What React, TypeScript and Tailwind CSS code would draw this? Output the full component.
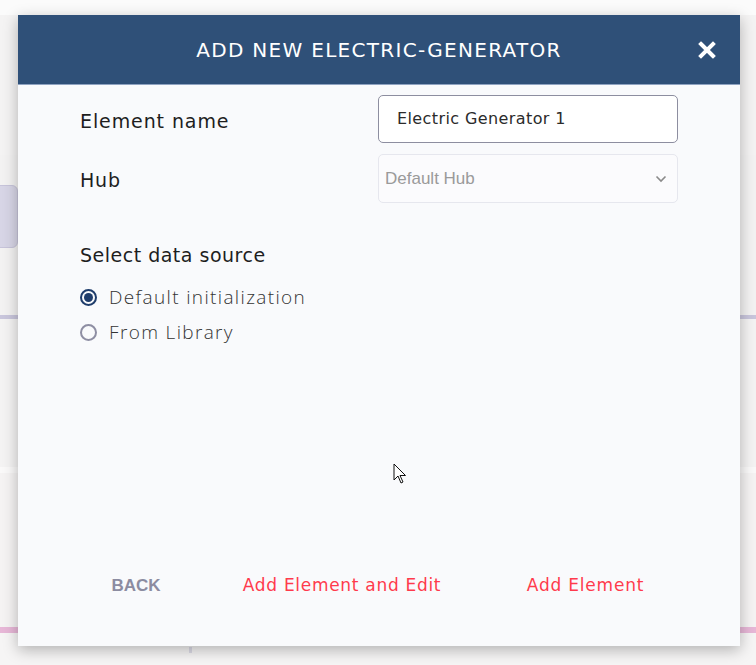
import React from 'react';

const labelFont = { fontFamily: '"DejaVu Sans", "Open Sans", sans-serif' };
const arial = { fontFamily: '"Liberation Sans", Arial, sans-serif' };
const lightFont = { fontFamily: '"Open Sans", "DejaVu Sans", sans-serif' };

const Radio: React.FC<{ checked?: boolean; label: string }> = ({ checked, label }) => (
  <label className="flex items-center h-[35px] gap-[12px]">
    <span
      className={
        checked
          ? 'flex items-center justify-center w-[17px] h-[17px] rounded-full border-2 border-[#1f3d6b]'
          : 'flex items-center justify-center w-[17px] h-[17px] rounded-full border-2 border-[#8e8ea3]'
      }
    >
      {checked && <span className="w-[9px] h-[9px] rounded-full bg-[#1f3d6b]" />}
    </span>
    <span className="text-[19px] font-light tracking-[1.35px] text-[#333333]" style={lightFont}>
      {label}
    </span>
  </label>
);

const App: React.FC = () => {
  return (
    <div className="relative w-[756px] h-[665px] overflow-hidden bg-[#f3f2f2]" style={labelFont}>
      {/* page behind the modal */}
      <div className="flex flex-col h-full">
        <div className="h-[15px] bg-[#fbfbfb]" />
        <div className="h-[140px] bg-[#f4f3f3]" />
        <div className="flex items-start h-[160px] pt-[30px]">
          <div className="w-[24px] h-[63px] ml-[-6px] rounded-[6px] bg-[#d7d5e6] border border-[#c7c4da]" />
        </div>
        <div className="h-[4px] bg-[#c9c6dc]" />
        <div className="h-[148px] bg-[#f4f3f3]" />
        <div className="h-[6px] bg-[#faf9f9]" />
        <div className="h-[154px] bg-[#f5f3f3]" />
        <div className="h-[6px] bg-[#e7b7d7]" />
        <div className="flex-1 bg-[#f6f5f5] pl-[189px] pt-[4px]">
          <div className="w-[3px] h-[6px] bg-[#dcdbe6] mb-[4px]" />
          <div className="w-[3px] h-[6px] bg-[#dcdbe6]" />
        </div>
      </div>

      {/* modal */}
      <div className="absolute left-[18px] top-[15px] w-[722px] h-[631px] flex flex-col bg-[#f9fafc] shadow-[0_4px_14px_rgba(0,0,0,0.28)]">
        <div className="relative h-[70px] flex items-center justify-center bg-[#2f5078] border-b border-[#8fa3c1]">
          <span className="text-white text-[20px] tracking-[1.3px]">ADD NEW ELECTRIC-GENERATOR</span>
          <svg className="absolute right-[24px] top-[26px]" width="18" height="18" viewBox="0 0 18 18">
            <path d="M3 3 L15 15 M15 3 L3 15" stroke="#ffffff" strokeWidth="4" strokeLinecap="square" />
          </svg>
        </div>

        <div className="flex-1 flex flex-col px-[62px] pt-[10px]">
          <div className="flex items-center justify-between">
            <span className="text-[19px] tracking-[0.9px] text-[#1e1e1e] pt-[5px]">Element name</span>
            <div className="w-[300px] h-[48px] flex items-center px-[18px] rounded-[5px] border border-[#8d8ea0] bg-white text-[16px] tracking-[0.4px] text-[#2b2b2b]">
              Electric Generator 1
            </div>
          </div>
          <div className="flex items-center justify-between mt-[11px]">
            <span className="text-[19px] tracking-[0.8px] text-[#1e1e1e] pt-[3px]">Hub</span>
            <div
              className="w-[300px] h-[49px] flex items-center justify-between pl-[6px] pr-[10px] rounded-[5px] border border-[#e6e7ee] bg-[#fbfbfd] text-[17px] text-[#9a9a9a]"
              style={arial}
            >
              <span>Default Hub</span>
              <svg width="12" height="8" viewBox="0 0 12 8">
                <path d="M1.5 1.5 L6 6 L10.5 1.5" fill="none" stroke="#8a8a8a" strokeWidth="1.6" />
              </svg>
            </div>
          </div>

          <div className="mt-[38px] text-[19px] tracking-[0.5px] text-[#1e1e1e]">Select data source</div>
          <div className="mt-[10px] flex flex-col">
            <Radio checked label="Default initialization" />
            <Radio label="From Library" />
          </div>

          <div className="flex-1" />

          <div className="flex items-center h-[30px] mb-[45px] ml-[-62px]">
            <button className="w-[100px] ml-[68px] text-center text-[17px] font-bold text-[#8c8ca1]" style={arial}>
              BACK
            </button>
            <button className="w-[240px] ml-[36px] text-center text-[17px] tracking-[0.7px] text-[#ff3a4c]">
              Add Element and Edit
            </button>
            <button className="w-[161px] ml-[43px] text-center text-[17px] tracking-[0.8px] text-[#ff3a4c]">
              Add Element
            </button>
          </div>
        </div>
      </div>

      {/* mouse pointer */}
      <svg className="absolute left-[393px] top-[463px]" width="14" height="22" viewBox="0 0 14 22">
        <path
          d="M1 1 L1 17 L5 13 L8 20 L10 19 L7 12.5 L12.5 12.5 Z"
          fill="#ffffff"
          stroke="#111111"
          strokeWidth="1"
          strokeLinejoin="miter"
        />
      </svg>
    </div>
  );
};

export default App;
